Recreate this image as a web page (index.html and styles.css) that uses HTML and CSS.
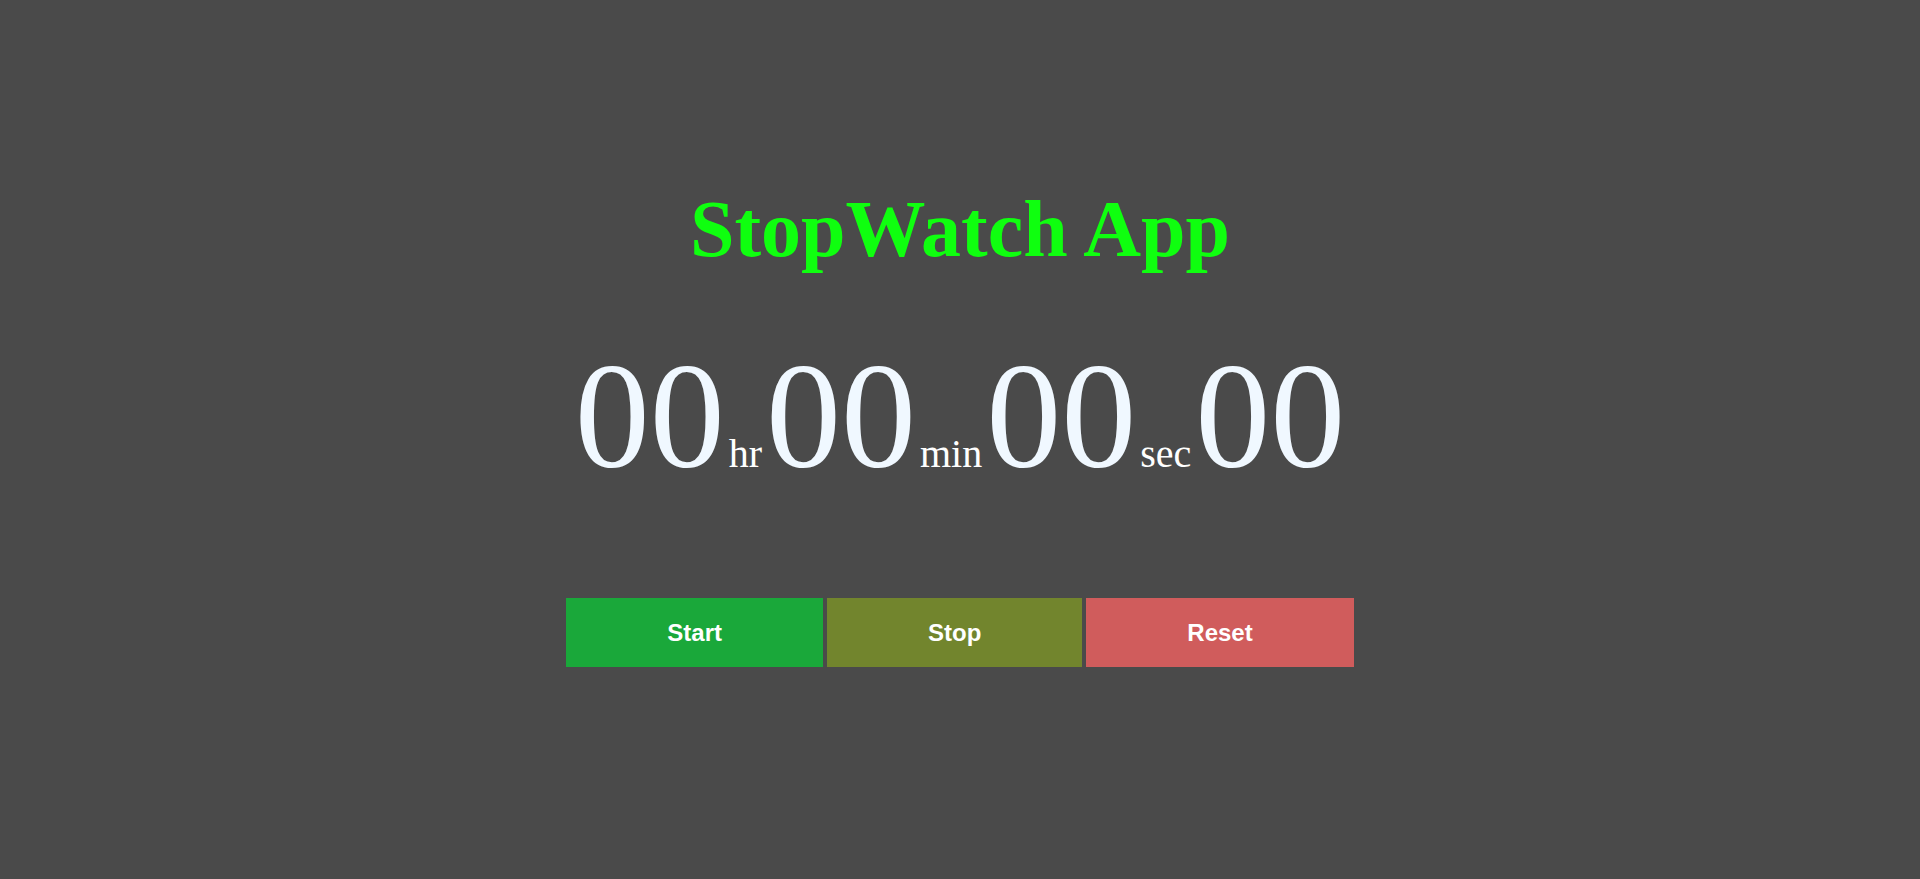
FILE: index.html
```html
<!DOCTYPE html>
<html>
<head>
<meta charset="utf-8">
<title>StopWatch App</title>
<link rel="stylesheet" href="styles.css">
</head>
<body>
<main class="app">
  <h1 class="title">StopWatch App</h1>
  <div class="timer">
    <span class="digits">00</span><span class="unit">hr</span><span class="digits">00</span><span class="unit">min</span><span class="digits">00</span><span class="unit">sec</span><span class="digits">00</span>
  </div>
  <div class="controls">
    <button class="btn btn-start">Start</button>
    <button class="btn btn-stop">Stop</button>
    <button class="btn btn-reset">Reset</button>
  </div>
</main>
</body>
</html>
```

FILE: styles.css
```css
html, body {
  margin: 0;
  padding: 0;
  height: 100%;
}
body {
  background: #4a4a4a;
  font-family: "Liberation Serif", "Times New Roman", serif;
}
.app {
  display: flex;
  flex-direction: column;
  align-items: center;
  padding-top: 183px;
}
.title {
  margin: 0;
  font-size: 80px;
  font-weight: bold;
  color: #0fff0f;
  line-height: 92px;
}
.timer {
  margin-top: 55px;
  color: #f0f8ff;
  line-height: 172px;
  white-space: nowrap;
}
.digits {
  font-size: 150px;
}
.unit {
  font-size: 40px;
  color: #ffffff;
  margin: 0 4px;
}
.controls {
  margin-top: 50px;
  display: flex;
  gap: 4px;
}
.btn {
  font-family: "Liberation Sans", Arial, sans-serif;
  font-size: 24px;
  font-weight: bold;
  color: #ffffff;
  padding: 20px 100px;
  border: 1px solid transparent;
  line-height: 27px;
  cursor: pointer;
}
.btn-start { background: #1aa83a; border-color: #1aa83a; }
.btn-stop { background: #72852d; border-color: #72852d; }
.btn-reset { background: #d05c5c; border-color: #d05c5c; }
```
